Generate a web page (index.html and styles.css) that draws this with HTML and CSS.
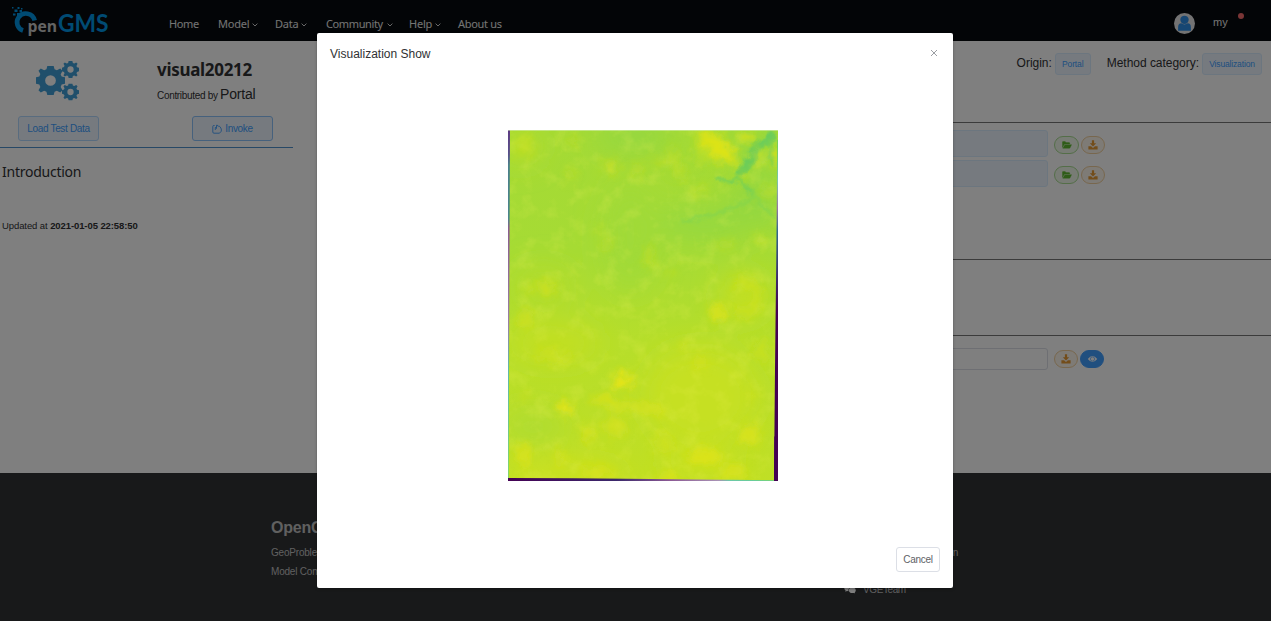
FILE: index.html
```html
<!DOCTYPE html>
<html lang="en">
<head>
<meta charset="utf-8">
<title>OpenGMS</title>
<link rel="stylesheet" href="styles.css">
</head>
<body>
<svg width="0" height="0" class="defs">
  <symbol id="chev" viewBox="0 0 6 4"><path d="M.6.6 3 3 5.400.6" fill="none" stroke="currentColor" stroke-width=".9"/></symbol>
  <symbol id="folder" viewBox="0 0 12 10"><path d="M.5 8V1.500Q.5.8 1.200.8H3.800L4.800 2H8.500Q9.300 2 9.300 2.800V3.800H4Q3 3.800 2.500 4.700Z M1 9 3.100 5.200Q3.400 4.600 4 4.600H11.500L9.700 8.300Q9.300 9 8.600 9Z" fill="currentColor" stroke="currentColor" stroke-width=".4"/></symbol>
  <symbol id="down" viewBox="0 0 10 10"><path d="M3.900.3H6.100V3.200H8.200L5 6.500 1.800 3.200H3.900ZM.4 6.300H3.100L5 8 6.900 6.300H9.600V9.600H.4Z" fill="currentColor"/></symbol>
  <symbol id="gear" viewBox="-10 -10 20 20"><path fill-rule="evenodd" fill="currentColor" d="M-2.200-10H2.200L2.800-7.700 4.400-7 6.700-8.300 8.300-6.700 7-4.200 7.700-2.700 10-2.200V2.200L7.700 2.800 7 4.400 8.300 6.700 6.700 8.300 4.400 7 2.800 7.700 2.200 10H-2.200L-2.800 7.700-4.400 7-6.700 8.300-8.300 6.700-7 4.400-7.700 2.800-10 2.200V-2.200L-7.700-2.800-7-4.400-8.300-6.700-6.700-8.300-4.400-7-2.800-7.700ZM0-3.700A3.700 3.700 0 1 0 0 3.700 3.700 3.700 0 1 0 0-3.700Z"/></symbol>
</svg>

<header class="nav">
  <svg class="logo" viewBox="0 0 100 32">
    <path d="M12 25.500A8.600 8.600 0 0 1 7.500 12.500A9 9 0 0 1 23.700 15.500" fill="none" stroke="#0096e6" stroke-width="4.600"/>
    <g fill="#0096e6"><rect x="1" y="2" width="1.500" height="1.500"/><rect x="3.500" y="4.500" width="3" height="2.500"/><rect x="6.500" y="2" width="2" height="2"/><rect x="10" y="3" width="1.500" height="1.500"/><rect x="2" y="8.500" width="2.500" height="2"/><rect x="6" y="8" width="3" height="3"/><rect x="8.500" y="5" width="2.500" height="2.500"/></g>
    <text x="16.500" y="27" class="logo-pen" textLength="29.500" lengthAdjust="spacingAndGlyphs">pen</text>
    <text x="47" y="27" class="logo-gms" textLength="50.500" lengthAdjust="spacingAndGlyphs">GMS</text>
  </svg>
  <nav class="menu">
    <a class="m-home">Home</a>
    <a class="m-model">Model<svg><use href="#chev"/></svg></a>
    <a class="m-data">Data<svg><use href="#chev"/></svg></a>
    <a class="m-comm">Community<svg><use href="#chev"/></svg></a>
    <a class="m-help">Help<svg><use href="#chev"/></svg></a>
    <a class="m-about">About us</a>
  </nav>
  <div class="user">
    <svg class="avatar" viewBox="0 0 20 20"><circle cx="10" cy="10" r="10" fill="#e6e6e6"/><circle cx="10" cy="6.500" r="4" fill="#2f8fe6"/><path d="M3.900 16.800V13.500Q3.900 10 7 9.800Q10 12 13 9.800Q16.100 10 16.100 13.500V16.800Z" fill="#2f8fe6"/></svg>
    <span>my</span><i class="dot"></i>
  </div>
</header>

<main class="page">
  <aside class="side">
    <div class="summary">
      <svg class="gears" viewBox="0 0 44 40"><use href="#gear" x="0" y="5" width="29" height="29"/><use href="#gear" x="26" y="0" width="17" height="17"/><use href="#gear" x="26" y="22.500" width="17" height="17"/></svg>
      <div class="who"><h1>visual20212</h1><p>Contributed by <b>Portal</b></p></div>
    </div>
    <div class="actions">
      <button class="plain">Load Test Data</button>
      <button class="plain strong"><svg viewBox="0 0 10 10"><path d="M2.600 1.500H1.800Q.8 1.500.8 2.500V8Q.8 9.200 2 9.200H7.500L9.300 7.200V5L8.100 2.800Q7.600 2 6.900 2.700Q6.500 1.500 5.700 2Q5.300.5 4.500 1.200V4.500L3.300 3.300V6" fill="none" stroke="currentColor" stroke-width=".9"/></svg>Invoke</button>
    </div>
    <section class="intro"><h2>Introduction</h2><p>Updated at <b>2021-01-05 22:58:50</b></p></section>
  </aside>
  <section class="detail">
    <div class="meta"><span>Origin:</span><em>Portal</em><span class="cat">Method category:</span><em class="vis">Visualization</em></div>
    <div class="inputs">
      <div class="row"><div class="field blue"></div><span class="pill green"><svg><use href="#folder"/></svg></span><span class="pill orange"><svg><use href="#down"/></svg></span></div>
      <div class="row"><div class="field blue"></div><span class="pill green"><svg><use href="#folder"/></svg></span><span class="pill orange"><svg><use href="#down"/></svg></span></div>
    </div>
    <div class="params"></div>
    <div class="outputs">
      <div class="row"><div class="field"></div><span class="pill orange"><svg><use href="#down"/></svg></span><span class="pill eye"><svg viewBox="0 0 12 8"><path d="M.8 4Q6-2.400 11.200 4 6 10.400.8 4Z" fill="#fff"/><circle cx="6" cy="4" r="2.300" fill="none" stroke="#409eff" stroke-width=".7"/></svg></span></div>
    </div>
  </section>
</main>

<footer class="foot">
  <div class="about"><h3>OpenGMS</h3><p>GeoProblem Solving</p><p>Model Computing</p></div>
  <div class="contact"><p class="mail">cn</p><p class="wx"><svg viewBox="0 0 12 10"><path d="M4.500.5C2 .5.300 2 .300 4 .300 5 .8 5.900 1.600 6.400L1.300 7.800 3 7 4.500 7.200C4 4.500 6 2.800 8.700 2.900 8 1.400 6.500.5 4.500.5Z" fill="#fff"/><ellipse cx="8.300" cy="6.200" rx="3.400" ry="2.800" fill="#fff"/><path d="M9.500 8.500 11 9.600 10.600 7.800Z" fill="#fff"/></svg>VGETeam</p></div>
</footer>

<div class="mask">
  <div class="dialog">
    <div class="dialog-head"><span>Visualization Show</span><svg viewBox="0 0 8 8"><path d="M1 1 7 7M7 1 1 7" stroke="#909399" stroke-width=".9"/></svg></div>
    <div class="dialog-body">
      <svg class="raster" viewBox="24 31 809 1052" preserveAspectRatio="none">
        <defs>
          <linearGradient id="base" x1="0" y1="0" x2="0" y2="1"><stop offset="0" stop-color="#a4da35"/><stop offset=".35" stop-color="#a6db34"/><stop offset=".6" stop-color="#b6de2b"/><stop offset="1" stop-color="#c0df25"/></linearGradient>
          <linearGradient id="left" x1="0" y1="0" x2="0" y2="1"><stop offset="0" stop-color="#5c3a83"/><stop offset=".07" stop-color="#57508c"/><stop offset=".1" stop-color="#4a7f8c"/><stop offset=".25" stop-color="#4a858c"/><stop offset=".28" stop-color="#8a5c90"/><stop offset=".55" stop-color="#9a80a5"/><stop offset=".68" stop-color="#62b8a8"/><stop offset="1" stop-color="#65d28a"/></linearGradient>
          <linearGradient id="right" x1="0" y1="0" x2="0" y2="1"><stop offset="0" stop-color="#5ec962"/><stop offset=".12" stop-color="#7cc6a8"/><stop offset=".2" stop-color="#9678a5"/><stop offset=".27" stop-color="#31688e"/><stop offset=".5" stop-color="#440154"/><stop offset="1" stop-color="#440154"/></linearGradient>
          <linearGradient id="bottom"><stop offset="0" stop-color="#440154"/><stop offset=".4" stop-color="#3b286b"/><stop offset=".6" stop-color="#8c5a95"/><stop offset=".78" stop-color="#a993b5"/><stop offset=".82" stop-color="#6cc8a8"/><stop offset="1" stop-color="#65d28a"/></linearGradient>
          <filter id="b40" filterUnits="userSpaceOnUse" x="-100" y="-100" width="1100" height="1350"><feGaussianBlur stdDeviation="42"/></filter>
          <filter id="b10" filterUnits="userSpaceOnUse" x="0" y="0" width="860" height="1110"><feTurbulence type="fractalNoise" baseFrequency=".03" numOctaves="3" seed="4" result="n"/><feGaussianBlur in="SourceGraphic" stdDeviation="13" result="s"/><feDisplacementMap in="s" in2="n" scale="34" xChannelSelector="R" yChannelSelector="G"/></filter>
          <filter id="b4" filterUnits="userSpaceOnUse" x="400" y="0" width="460" height="420"><feTurbulence type="fractalNoise" baseFrequency=".04" numOctaves="2" seed="8" result="n"/><feGaussianBlur in="SourceGraphic" stdDeviation="5" result="s"/><feDisplacementMap in="s" in2="n" scale="22" xChannelSelector="R" yChannelSelector="G"/></filter>
          <filter id="grain" x="0" y="0" width="1" height="1"><feTurbulence type="fractalNoise" baseFrequency=".02" numOctaves="4" seed="11"/><feColorMatrix values="0 0 0 0 .87 0 0 0 0 .89 0 0 0 0 .1 2.400 0 0 0 -1.150"/></filter>
          <clipPath id="frame"><rect x="24" y="31" width="809" height="1052"/></clipPath>
        </defs>
        <g clip-path="url(#frame)">
          <rect x="24" y="31" width="809" height="1052" fill="url(#base)"/>
          <g filter="url(#b40)">
            <ellipse cx="400" cy="50" rx="120" ry="40" fill="#92d742"/>
            <ellipse cx="610" cy="310" rx="140" ry="50" fill="#94d840"/>
            <ellipse cx="780" cy="240" rx="90" ry="80" fill="#93d741"/>
            <ellipse cx="760" cy="80" rx="60" ry="60" fill="#90d743"/>
            <ellipse cx="60" cy="80" rx="60" ry="50" fill="#b6de2a"/>
            <ellipse cx="130" cy="500" rx="90" ry="60" fill="#b3dd2c"/>
            <ellipse cx="730" cy="530" rx="70" ry="70" fill="#c5e021"/>
            <ellipse cx="160" cy="670" rx="140" ry="60" fill="#c2df23"/>
            <ellipse cx="600" cy="830" rx="170" ry="150" fill="#c6e020"/>
            <ellipse cx="100" cy="920" rx="100" ry="50" fill="#aedc30"/>
            <ellipse cx="200" cy="1060" rx="190" ry="35" fill="#cde11d"/>
            <ellipse cx="600" cy="1040" rx="130" ry="40" fill="#cae11f"/>
            <ellipse cx="390" cy="350" rx="80" ry="160" fill="#a0da39"/>
          </g>
          <rect x="24" y="31" width="809" height="1052" filter="url(#grain)" opacity=".22"/>
          <g filter="url(#b4)" fill="none" stroke-linecap="round" stroke-linejoin="round">
            <path d="M815 45 795 70 762 85 757 115 725 155" stroke="#6ccd5a" stroke-width="27"/>
            <path d="M810 65 812 140M712 172 690 190 650 175M715 175 755 220" stroke="#76d055" stroke-width="10"/>
            <path d="M755 225 820 290M760 235 660 280 550 305" stroke="#88d548" stroke-width="9"/>
          </g>
          <g filter="url(#b10)" fill="#dde318">
            <path d="M595 48 645 45 695 95 700 130 660 120Z" stroke="#dde318" stroke-width="14"/>
            <path d="M600 75 610 130" fill="none" stroke="#bddf26" stroke-width="30"/>
            <path d="M510 80 532 140 547 180" fill="none" stroke="#c4e022" stroke-width="14"/>
            <ellipse cx="740" cy="52" rx="25" ry="13"/><ellipse cx="825" cy="105" rx="12" ry="30"/>
            <ellipse cx="778" cy="110" rx="10" ry="35" opacity=".7"/><ellipse cx="730" cy="170" rx="18" ry="12" opacity=".5"/>
            <ellipse cx="800" cy="215" rx="25" ry="20" opacity=".4"/>
            <ellipse cx="330" cy="140" rx="25" ry="25" opacity=".45"/><ellipse cx="410" cy="150" rx="20" ry="20" opacity=".35"/>
            <ellipse cx="480" cy="125" rx="35" ry="10" opacity=".35"/><ellipse cx="600" cy="210" rx="25" ry="14" opacity=".3"/>
            <ellipse cx="75" cy="80" rx="30" ry="40" opacity=".22"/><ellipse cx="210" cy="165" rx="15" ry="25" opacity=".3"/>
            <ellipse cx="215" cy="65" rx="15" ry="15" opacity=".4"/>
            <ellipse cx="320" cy="370" rx="16" ry="20" opacity=".35"/><ellipse cx="300" cy="330" rx="10" ry="9" opacity=".4"/>
            <path d="M460 385 433 420 463 435" stroke="#cde11d" stroke-width="13" fill="none" opacity=".8"/>
            <ellipse cx="510" cy="460" rx="15" ry="12" opacity=".3"/><ellipse cx="675" cy="375" rx="30" ry="16" opacity=".3"/>
            <ellipse cx="780" cy="360" rx="18" ry="18" opacity=".3"/>
            <ellipse cx="140" cy="505" rx="28" ry="22" opacity=".55"/><ellipse cx="90" cy="510" rx="18" ry="10" opacity=".4"/>
            <ellipse cx="75" cy="595" rx="26" ry="30" opacity=".45"/><ellipse cx="652" cy="577" rx="28" ry="24" opacity=".85"/>
            <path d="M700 490Q760 470 775 530 765 590 710 575" fill="none" stroke="#d2e21b" stroke-width="20" opacity=".75"/>
            <path d="M815 680 783 670 768 695 803 725" fill="none" stroke="#d2e21b" stroke-width="13"/>
            <path d="M110 720Q130 690 160 700L155 735M190 700 210 730" fill="none" stroke="#d5e21a" stroke-width="13" opacity=".8"/>
            <ellipse cx="368" cy="782" rx="32" ry="26" fill="#e5e419"/><ellipse cx="193" cy="862" rx="22" ry="20" fill="#e5e419"/>
            <path d="M275 840 315 835 350 860 400 855 490 878" fill="none" stroke="#dfe318" stroke-width="14"/>
            <ellipse cx="320" cy="838" rx="18" ry="13"/>
            <ellipse cx="343" cy="920" rx="35" ry="35" opacity=".5"/><ellipse cx="264" cy="940" rx="22" ry="25" opacity=".6"/>
            <ellipse cx="603" cy="725" rx="22" ry="20" opacity=".5"/><ellipse cx="548" cy="675" rx="15" ry="15" opacity=".3"/>
            <ellipse cx="72" cy="1005" rx="22" ry="32" opacity=".8"/><ellipse cx="178" cy="1010" rx="13" ry="28" opacity=".5"/>
            <ellipse cx="290" cy="1055" rx="45" ry="20" opacity=".6"/><ellipse cx="613" cy="1008" rx="50" ry="25" opacity=".9"/>
            <ellipse cx="748" cy="945" rx="32" ry="33" opacity=".75"/><ellipse cx="700" cy="1055" rx="40" ry="22" opacity=".7"/>
            <ellipse cx="505" cy="1073" rx="30" ry="12"/><ellipse cx="490" cy="970" rx="30" ry="32" opacity=".4"/>
            <ellipse cx="75" cy="830" rx="12" ry="9" opacity=".5"/><ellipse cx="755" cy="825" rx="16" ry="10" opacity=".4"/>
          </g>
          <path d="M24 31H30L28 500 26 1083H24Z" fill="url(#left)"/>
          <path d="M833 60H831L828 400 824 750 821 1083H833Z" fill="url(#right)"/>
          <path d="M24 1074 225 1075 833 1081V1083H24Z" fill="url(#bottom)"/>
          <path d="M822 950 821 1083H833V950Z" fill="#440154"/>
          <path d="M24 32H833" stroke="#d7eec0" stroke-width="2"/>
        </g>
      </svg>
    </div>
    <div class="dialog-foot"><button class="cancel">Cancel</button></div>
  </div>
</div>
</body>
</html>
```
FILE: styles.css
```css
*{box-sizing:border-box}
body,h1,h2,h3,p{margin:0}
body{width:1271px;height:621px;overflow:hidden;background:#303235;font-family:"Liberation Sans",Arial,sans-serif;color:#303133;display:flex;flex-direction:column}
.defs{position:absolute}
button{font-family:inherit}
.nav{height:41px;flex:none;background:#060a0e;display:flex;align-items:flex-start;color:#e8e8e8}
.logo{width:100px;height:32px;margin:5px 0 0 11px}
.logo-pen{font:bold 16.500px "Open Sans",sans-serif;fill:#c8c8c8}
.logo-gms{font:bold 24px Lato,sans-serif;fill:#0096e6}
.menu{display:flex;margin:16px 0 0 58px;font:11px/16px "Noto Sans",sans-serif;flex:1}
.menu a{display:flex;align-items:center;justify-content:space-between;white-space:nowrap;letter-spacing:-.2px}
.menu svg{width:6px;height:4px;flex:none;margin-top:2px}
.menu .m-home{width:29px;margin-right:20px;letter-spacing:-.5px}
.menu .m-home{letter-spacing:-.35px}
.m-model{width:40px;margin-right:17px}
.m-data{width:32px;margin-right:19px}
.menu .m-comm{width:67px;margin-right:16px;letter-spacing:-.38px}
.m-help{width:32px;margin-right:17px}
.menu .m-about{letter-spacing:-.3px}
.user{display:flex;width:97px;padding-top:13px;font-size:11px}
.avatar{width:21px;height:21px;margin-right:18px}
.user span{margin-top:3px;line-height:13px}
.dot{width:6px;height:6px;border-radius:50%;background:#f56c6c;margin-left:10px}
.page{display:flex;height:431.500px;flex:none;background:#fff}
.side{width:293px;flex:none}
.summary{display:flex;height:75px;padding:20px 0 0 36px}
.gears{width:44px;height:40px;color:#409fd6;margin-right:77px}
.who h1{font:bold 17px/18px "Noto Sans",sans-serif;letter-spacing:-.3px}
.who p{font-size:10px;line-height:16px;margin-top:7px;white-space:nowrap;letter-spacing:-.32px}
.who b{font-size:14px;font-weight:400;letter-spacing:-.2px}
.actions{display:flex;justify-content:space-between;padding:0 20px 0 18px;height:32px;border-bottom:1px solid #4f90cc}
.plain{width:81px;height:25px;border:1px solid #b3d8ff;border-radius:3px;background:#ecf5ff;color:#409eff;font-size:10px;padding:0;white-space:nowrap;letter-spacing:-.33px}
.strong{border-color:#8cc2fa;display:flex;justify-content:center;align-items:center;gap:3px}
.plain svg{width:10px;height:10px}
.intro{padding:14px 0 0 2px}
.intro h2{font:14px/20px "Noto Sans",sans-serif;letter-spacing:-.25px}
.intro p{font-size:9.500px;line-height:14px;margin-top:37px;letter-spacing:-.09px}
.detail{margin-left:24px;flex:1}
.meta{height:82px;display:flex;align-items:flex-start;justify-content:flex-end;padding:12px 9px 0 0;font-size:12px;line-height:20px;border-bottom:1px solid #777;letter-spacing:-.03px}
.meta em{font-style:normal;font-size:8.500px;color:#409eff;background:#ecf5ff;border:1px solid #d9ecff;border-radius:3px;height:22px;width:36px;text-align:center;letter-spacing:-.15px;margin-left:3px}
.meta em.vis{width:60px}
.cat{margin-left:16px}
.inputs{height:137px;padding-top:7px;border-bottom:1px solid #777}
.params{height:76px;border-bottom:1px solid #777}
.outputs{padding-top:10px}
.row{display:flex;align-items:center;height:26px;margin-bottom:4.500px}
.field{width:731px;height:22px;border:1px solid #dcdfe6;border-radius:3px;margin-right:6px}
.field.blue{height:27px;background:#ecf5ff;border-color:#d9ecff}
.pill{height:18px;width:24px;border:1px solid;border-radius:9px;display:flex;align-items:center;justify-content:center;margin-right:2px;margin-top:3px}
.pill svg{width:10px;height:10px}
.green{width:25px;color:#5cb92f;background:#f0f9eb;border-color:#a8dc90}
.orange{color:#e69a35;background:#fdf6ec;border-color:#f0cf9c}
.eye{background:#409eff;border-color:#409eff;color:#fff}
.eye svg{width:11px;height:8px}
.outputs .pill{margin-top:0}
.foot{height:147px;flex:none;background:#303235;color:#c0c0c0;display:flex;font-size:10px;letter-spacing:-.2px}
.about{width:573px;padding:45px 0 0;margin-left:271px}
.about h3{font-size:16px;line-height:20px;margin-bottom:5px}
.about p{line-height:19px}
.contact{padding-top:70px}
.contact p{line-height:19px}
.mail{width:114px;text-align:right}
.wx{display:flex;align-items:center;gap:7px;margin-top:18px;letter-spacing:-.4px}
.wx svg{width:12px;height:10px}
.mask{position:absolute;inset:0;background:rgba(0,0,0,.5);padding:33px 318px 33px 317px}
.dialog{height:555px;width:636px;background:#fff;border-radius:2px;display:flex;flex-direction:column;box-shadow:0 1px 3px rgba(0,0,0,.3)}
.dialog-head{height:42px;padding:13px 15px 0 13px;display:flex;justify-content:space-between;font-size:12px;line-height:16px}
.dialog-head svg{width:8px;height:8px;margin-top:3px}
.dialog-body{flex:1;padding:55px 0 0 191px}
.raster{width:270px;height:351px;display:block}
.dialog-foot{height:41px;padding-right:13px;display:flex;justify-content:flex-end;align-items:flex-start}
.cancel{width:44px;height:25px;background:#fff;border:1px solid #dcdfe6;border-radius:3px;color:#606266;font-size:10px;padding:0;letter-spacing:-.25px}
```
